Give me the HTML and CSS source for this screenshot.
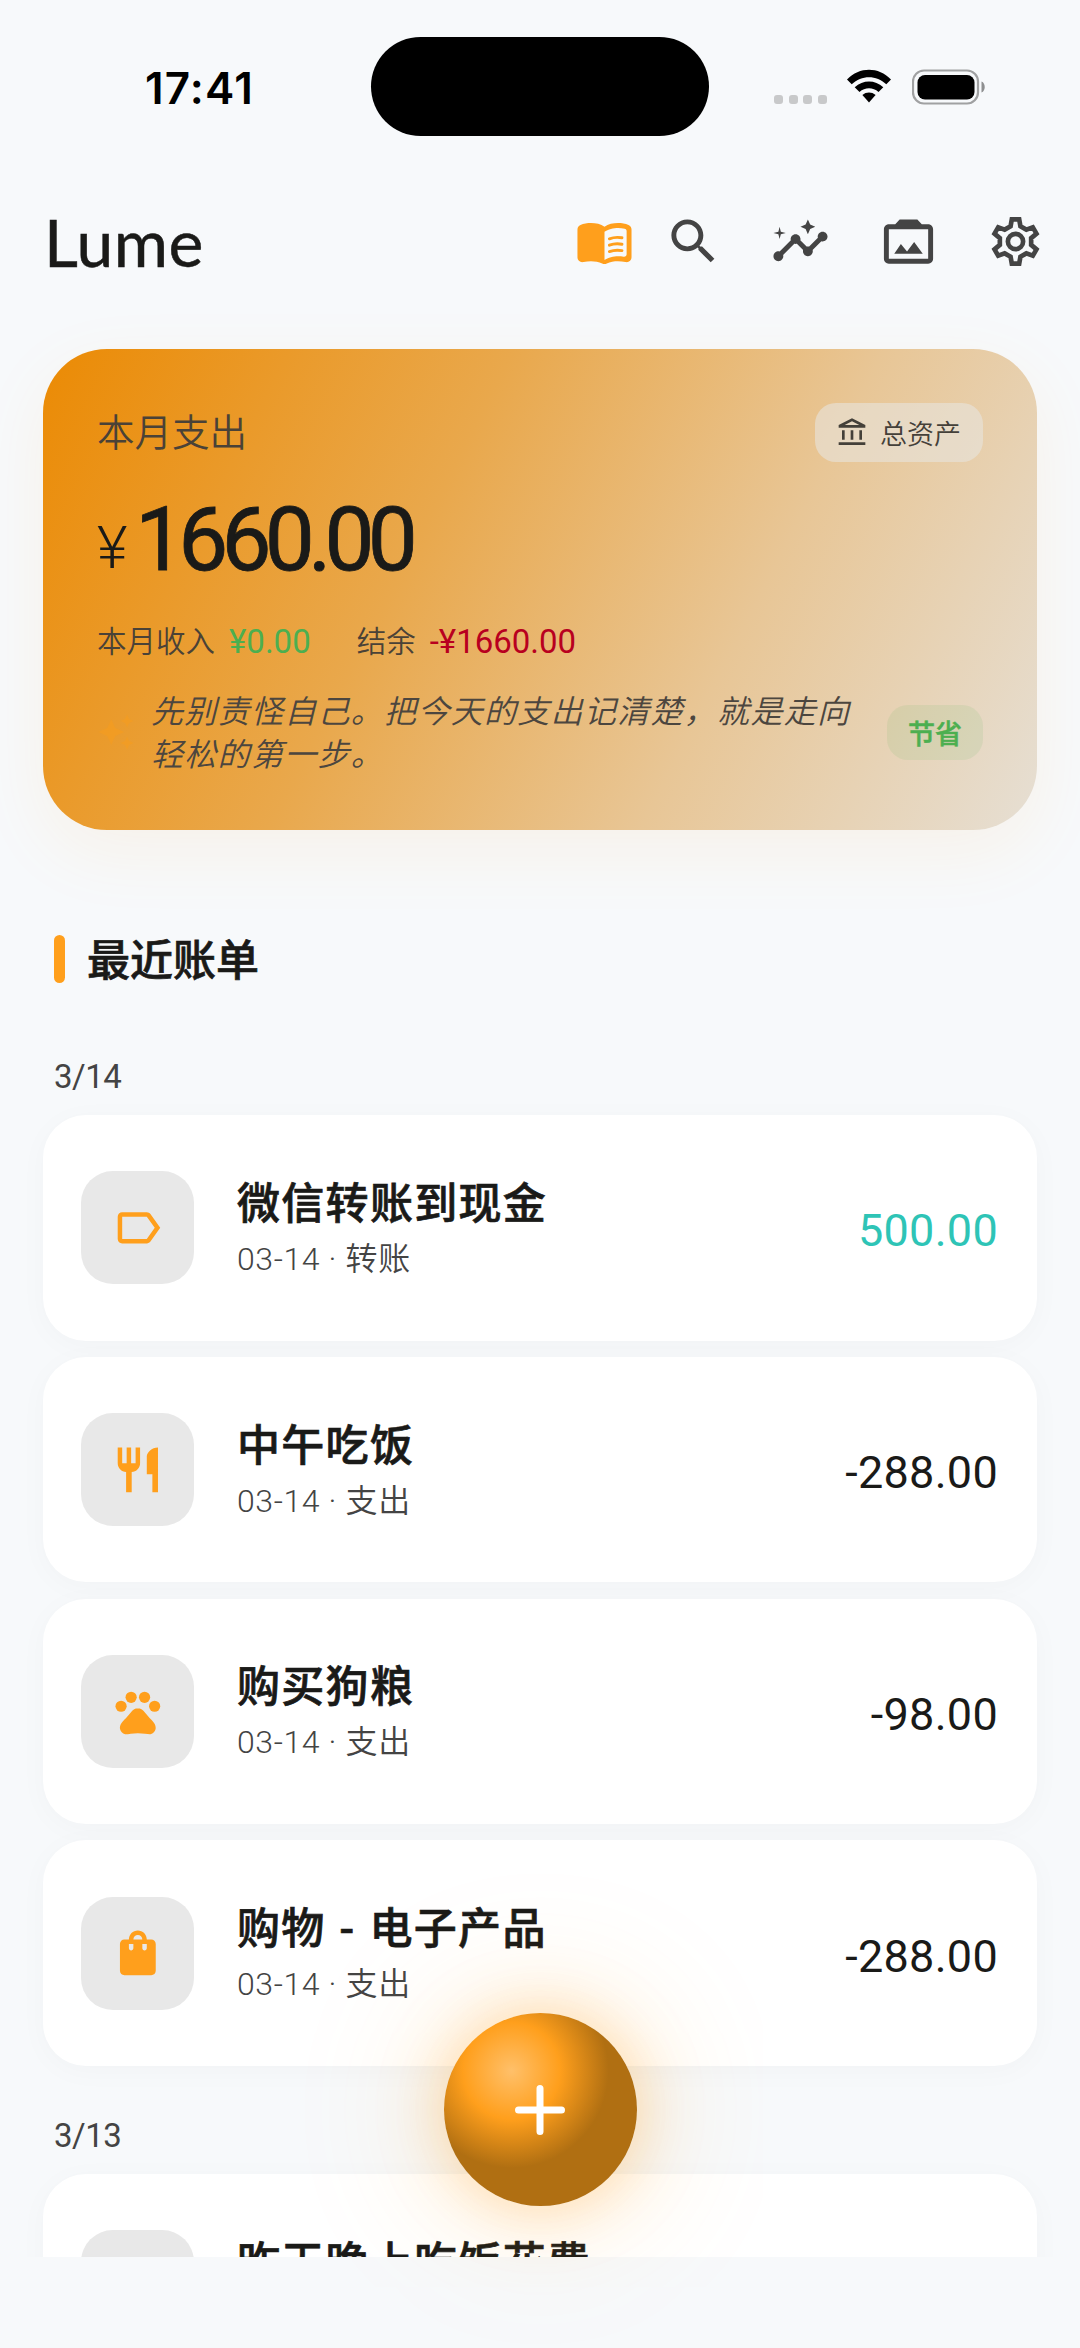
FILE: index.html
```html
<!DOCTYPE html>
<html lang="zh-CN">
<head>
<meta charset="utf-8">
<title>Lume</title>
<link rel="stylesheet" href="styles.css">
</head>
<body>
<div class="screen">
  <header class="status">
    <div class="time">17:41</div>
    <div class="island"></div>
    <div class="indicators">
      <span class="dots"><i></i><i></i><i></i><i></i></span>
      <svg class="wifi" viewBox="0 0 46 34" width="46" height="34"><path d="M1 10.500C13.500-2.500 32.500-2.500 45 10.500L40.300 15.300C30.500 5.800 15.500 5.800 5.700 15.300Z"/><path d="M8.700 18.200C17 10.500 29 10.500 37.300 18.200L32.500 23C27 18 19 18 13.500 23Z"/><path d="M16.400 26C20.200 22.700 25.800 22.700 29.600 26L23 33.500Z"/></svg>
      <svg class="battery" viewBox="0 0 74 36" width="74" height="36"><rect x="1" y="1.500" width="65" height="33" rx="11" fill="none" stroke="#a0a1a2" stroke-width="2.200"/><rect x="5.500" y="6" width="57" height="24.500" rx="7.500"/><path d="M69.500 12.500C73.800 14 73.800 22 69.500 23.500Z" fill="#8e8f90"/></svg>
    </div>
  </header>

  <nav class="appbar">
    <h1>Lume</h1>
    <div class="actions">
      <svg class="icon accent" viewBox="0 0 24 24"><path fill-rule="evenodd" d="M17.500 4.500c-1.950 0-4.050.4-5.500 1.500-1.450-1.100-3.550-1.500-5.500-1.500-1.450 0-2.990.22-4.280.79C1.490 5.620 1 6.330 1 7.140v11.280c0 1.300 1.220 2.260 2.480 1.940.98-.25 2.020-.36 3.020-.36 1.560 0 3.220.26 4.560.92.6.3 1.280.3 1.870 0 1.340-.67 3-.92 4.560-.92 1 0 2.040.11 3.020.36 1.260.33 2.480-.63 2.480-1.940V7.140c0-.81-.49-1.520-1.220-1.850-1.280-.57-2.820-.79-4.270-.79M21 17.230c0 .63-.58 1.090-1.200.98-.75-.14-1.530-.2-2.300-.2-1.700 0-4.150.65-5.500 1.500V8c1.350-.85 3.800-1.500 5.500-1.500.92 0 1.830.09 2.700.28.460.1.800.51.800.98z"/><path d="M14 10.900c1.600-.6 3.500-.7 5.100-.4M14 13.500c1.600-.6 3.500-.7 5.100-.4M14 16.100c1.600-.6 3.500-.7 5.100-.4" fill="none" stroke="currentColor" stroke-width="1.200" stroke-linecap="round"/></svg>
      <svg class="icon" viewBox="0 0 24 24"><path d="M15.500 14h-.79l-.28-.27C15.410 12.590 16 11.110 16 9.500 16 5.910 13.090 3 9.500 3S3 5.910 3 9.500 5.910 16 9.500 16c1.610 0 3.090-.59 4.230-1.570l.27.28v.79l5 4.990L20.490 19l-4.990-5zm-6 0C7.010 14 5 11.990 5 9.500S7.010 5 9.500 5 14 7.010 14 9.500 11.990 14 9.500 14z"/></svg>
      <svg class="icon" viewBox="0 0 24 24"><path d="M21 8c-1.450 0-2.260 1.440-1.930 2.510l-3.550 3.560c-.3-.09-.74-.09-1.040 0l-2.550-2.550C12.270 10.450 11.460 9 10 9c-1.450 0-2.270 1.440-1.930 2.520l-4.560 4.550C2.440 15.740 1 16.550 1 18c0 1.100.9 2 2 2 1.450 0 2.260-1.440 1.930-2.510l4.550-4.560c.3.090.74.090 1.040 0l2.550 2.550C12.730 16.550 13.540 18 15 18c1.450 0 2.270-1.440 1.930-2.520l3.560-3.550C21.560 12.260 23 11.450 23 10c0-1.100-.9-2-2-2z"/><path d="M15 9l.94-2.070L18 6l-2.060-.93L15 3l-.92 2.070L12 6l2.080.93zM3.500 11L4 9l2-.5L4 8l-.5-2L3 8l-2 .5L3 9z"/></svg>
      <svg class="icon" viewBox="0 0 24 24"><path d="M20 5h-2.600L15.600 3H8.400L6.600 5H4c-1.100 0-2 .9-2 2v12c0 1.100.9 2 2 2h16c1.100 0 2-.9 2-2V7c0-1.100-.9-2-2-2zm0 14H4V7h16v12z"/><path d="M6.200 17L8.900 13l2.500 3.100L14.300 12.200L17.800 17z"/></svg>
      <svg class="icon" viewBox="-12 -12 24 24"><path class="line" d="M-1.500-9H1.500L2-6.200L4.400-4.840L7.040-5.800L8.540-3.200L6.370-1.370V1.370L8.540 3.200L7.040 5.800L4.400 4.840L2 6.200L1.500 9H-1.500L-2 6.200L-4.400 4.840L-7.040 5.800L-8.540 3.200L-6.370 1.370V-1.370L-8.540-3.200L-7.040-5.800L-4.400-4.840L-2-6.200Z"/><circle class="line" r="3.100"/></svg>
    </div>
  </nav>

  <section class="summary">
    <div class="sum-top">
      <span class="label">本月支出</span>
      <span class="chip assets"><svg viewBox="0 0 24 24" width="32" height="32"><path d="M6.500 10h-2v7h2zM13 10h-2v7h2zM22 19H2v2h20zM19.500 10h-2v7h2zM12 1L2 6v2h20V6zM12 3.260L17.480 6H6.520z"/></svg>总资产</span>
    </div>
    <div class="total"><span class="yen">¥</span><span class="sum">1660.00</span></div>
    <div class="figures">
      <span>本月收入</span><b class="income">¥0.00</b><span class="second">结余</span><b class="balance">-¥1660.00</b>
    </div>
    <div class="advice">
      <svg class="spark" viewBox="0 0 24 24" width="38" height="38"><path d="M19 9l1.250-2.750L23 5l-2.750-1.250L19 1l-1.250 2.750L15 5l2.750 1.250zM11.500 9.500L9 4 6.500 9.500 1 12l5.500 2.500L9 20l2.500-5.500L17 12zM19 15l-1.250 2.750L15 19l2.750 1.250L19 23l1.250-2.750L23 19l-2.750-1.250z"/></svg>
      <p>先别责怪自己。把今天的支出记清楚，就是走向<br>轻松的第一步。</p>
      <span class="chip saving">节省</span>
    </div>
  </section>

  <h2>最近账单</h2>

  <main class="list">
    <h3>3/14</h3>
    <article class="bill">
      <span class="cat"><svg viewBox="0 0 24 24"><path d="M17.630 5.840C17.270 5.330 16.670 5 16 5L5 5.010C3.900 5.010 3 5.900 3 7v10c0 1.100.9 1.990 2 1.990L16 19c.67 0 1.270-.33 1.630-.84L22 12l-4.370-6.160zM16 17H5V7h11l3.550 5L16 17z"/></svg></span>
      <div class="info"><h4>微信转账到现金</h4><p><em>03-14 · </em>转账</p></div>
      <span class="amount transfer">500.00</span>
    </article>
    <article class="bill">
      <span class="cat"><svg viewBox="0 0 24 24"><path d="M11 9H9V2H7v7H5V2H3v7c0 2.120 1.660 3.840 3.750 3.970V22h2.500v-9.030C11.340 12.840 13 11.120 13 9V2h-2v7zm5-3v8h2.500v8H21V2c-2.760 0-5 2.240-5 4z"/></svg></span>
      <div class="info"><h4>中午吃饭</h4><p><em>03-14 · </em>支出</p></div>
      <span class="amount">-288.00</span>
    </article>
    <article class="bill">
      <span class="cat"><svg viewBox="0 0 24 24"><circle cx="4.500" cy="9.500" r="2.500"/><circle cx="9" cy="5.500" r="2.500"/><circle cx="15" cy="5.500" r="2.500"/><circle cx="19.500" cy="9.500" r="2.500"/><path d="M17.340 14.860c-.87-1.020-1.600-1.890-2.480-2.910-.46-.54-1.050-1.080-1.750-1.320-.11-.04-.22-.07-.33-.09-.25-.04-.52-.04-.78-.04s-.53 0-.79.050c-.11.020-.22.050-.33.090-.7.240-1.280.78-1.750 1.320-.87 1.020-1.600 1.890-2.480 2.910-1.310 1.310-2.920 2.760-2.620 4.790.29 1.020 1.020 2.030 2.330 2.320.73.150 3.060-.44 5.540-.44h.18c2.480 0 4.810.58 5.540.44 1.310-.29 2.040-1.310 2.330-2.320.31-2.040-1.300-3.490-2.610-4.800z"/></svg></span>
      <div class="info"><h4>购买狗粮</h4><p><em>03-14 · </em>支出</p></div>
      <span class="amount">-98.00</span>
    </article>
    <article class="bill">
      <span class="cat"><svg viewBox="0 0 24 24"><path fill-rule="evenodd" d="M18 6h-2c0-2.210-1.790-4-4-4S8 3.790 8 6H6c-1.100 0-2 .9-2 2v12c0 1.100.9 2 2 2h12c1.100 0 2-.9 2-2V8c0-1.100-.9-2-2-2zm-8 4c0 .55-.45 1-1 1s-1-.45-1-1V8h2v2zm2-6c1.100 0 2 .9 2 2h-4c0-1.100.9-2 2-2zm4 6c0 .55-.45 1-1 1s-1-.45-1-1V8h2v2z"/></svg></span>
      <div class="info"><h4>购物 - 电子产品</h4><p><em>03-14 · </em>支出</p></div>
      <span class="amount">-288.00</span>
    </article>
    <h3 class="next">3/13</h3>
    <article class="bill">
      <span class="cat"></span>
      <div class="info partial"><h4>昨天晚上吃饭花费</h4></div>
    </article>
  </main>

  <button class="fab" aria-label="添加"><svg viewBox="0 0 52 52" width="52" height="52"><path d="M26 4.500v43M4.500 26h43" stroke="#fff" stroke-width="7" stroke-linecap="round"/></svg></button>
</div>
</body>
</html>
```
FILE: styles.css
```css
* { box-sizing: border-box; margin: 0; padding: 0; }
body {
  background: #f7f9fb;
  color: #1a1a18;
  font-family: Roboto, "Noto Sans CJK SC", sans-serif;
}
h1, h2, h3, h4 { font-weight: 400; }
svg { display: block; flex: none; fill: currentColor; }
.screen {
  position: relative;
  width: 1080px;
  height: 2348px;
  overflow: hidden;
  display: flex;
  flex-direction: column;
  padding: 0 43px;
}

/* status bar */
.status {
  height: 174px;
  display: grid;
  grid-template-columns: 328px 338px 1fr;
  align-items: start;
  color: #000;
}
.time {
  padding: 61px 0 0 102px;
  font: 600 44px/54px Inter, sans-serif;
  letter-spacing: 1.200px;
}
.island { height: 99px; margin-top: 37px; border-radius: 50px; background: #000; }
.indicators { display: flex; padding: 69px 0 0 65px; }
.dots { display: flex; gap: 5.500px; padding-top: 26px; margin-right: 19px; }
.dots i { width: 9px; height: 9px; border-radius: 3px; background: #c8c9ca; }
.battery { margin-left: 20px; }

/* app bar */
.appbar {
  height: 134px;
  display: flex;
  align-items: center;
  justify-content: space-between;
  margin-right: -8px;
}
h1 { font: 400 66px/80px Lato, sans-serif; padding: 2px 0 0 1px; letter-spacing: 0.5px; -webkit-text-stroke: 0.5px currentColor; }
.actions { display: flex; gap: 48.500px; color: #444; }
.icon { width: 59px; height: 59px; }
.accent { color: #ff9f1c; margin-right: -19px; }
.line { fill: none; stroke: currentColor; stroke-width: 1.900; }

/* monthly summary */
.summary {
  flex: none;
  height: 481px;
  margin-top: 41px;
  padding: 54px;
  border-radius: 64px;
  background: linear-gradient(117deg, #eb8c08 2%, #e9a84c 38%, #e8c696 68%, #e6dfd4 100%);
  box-shadow: 0 22px 70px rgba(255, 159, 28, 0.08);
  color: #4a4237;
}
.sum-top { display: flex; justify-content: space-between; height: 59px; }
.label { font-size: 37.500px; line-height: 61px; font-weight: 350; }
.chip { display: flex; align-items: center; border-radius: 21px; font-size: 27px; }
.assets {
  width: 168px;
  height: 59px;
  padding-left: 21px;
  gap: 12px;
  background: rgba(232, 228, 222, 0.6);
  color: #444039;
  font-weight: 350;
}
.total { display: flex; align-items: baseline; height: 104px; margin-top: 26px; color: #1a1a18; line-height: 104px; }
.yen { width: 38px; font-size: 59px; font-weight: 300; position: relative; top: -2px; }
.sum { font-size: 89px; font-weight: 400; letter-spacing: -6.800px; -webkit-text-stroke: 0.8px currentColor; }
.figures { display: flex; height: 44px; line-height: 44px; margin-top: 28px; font-size: 29.500px; font-weight: 350; }
.figures b { font-weight: 400; font-size: 33px; margin-left: 14px; letter-spacing: 0; }
.figures .second { margin-left: 46px; }
.income { color: #4caf50; }
.balance { color: #b8001f; }
.advice { display: flex; margin-top: 27px; height: 86px; align-items: center; }
.spark { color: #f99d1c; opacity: 0.5; margin-top: -4px; }
.advice p {
  flex: 1;
  margin-left: 16px;
  white-space: nowrap;
  font-size: 32px;
  line-height: 43px;
  letter-spacing: 1.300px;
  font-style: italic;
  font-weight: 350;
  color: #4c463f;
}
.saving {
  width: 96px;
  height: 55px;
  margin-top: -3px;
  justify-content: center;
  background: rgba(76, 175, 80, 0.1);
  color: #4caf50;
  font-weight: 500;
  -webkit-text-stroke: 0.5px currentColor;
}

/* section heading */
h2 {
  flex: none;
  display: flex;
  align-items: center;
  height: 48px;
  margin: 105px 0 0 11px;
  font-size: 43px;
  font-weight: 500;
  line-height: 52px;
  padding-top: 3px;
  -webkit-text-stroke: 0.7px currentColor;
}
h2::before { content: ""; width: 11px; height: 48px; margin: -3px 22px 0 0; border-radius: 6px; background: #ff9f1c; }

/* bills */
.list {
  flex: none;
  height: 1230px;
  margin: 44px -43px 0;
  padding: 0 43px;
  overflow: hidden;
}
h3 { margin: 29px 0 17px 11px; font-size: 33px; line-height: 42px; color: #444; letter-spacing: -0.5px; }
h3.next { margin: 49px 0 17px 11px; }
.bill {
  display: flex;
  align-items: center;
  height: 225.700px;
  padding: 0 39px 0 38px;
  border-radius: 43px;
  background: #fff;
  box-shadow: 0 5px 30px rgba(0, 0, 0, 0.028);
}
.bill + .bill { margin-top: 16.100px; }
.cat {
  width: 113px;
  height: 113px;
  display: grid;
  place-items: center;
  border-radius: 32px;
  background: #e8e8e8;
  color: #ff9f1c;
}
.cat svg { width: 53.700px; height: 53.700px; }
.info { flex: 1; margin-left: 43px; }
.partial { padding-bottom: 48px; }
h4 { font-size: 43px; line-height: 60px; font-weight: 500; letter-spacing: 1.300px; word-spacing: 2px; -webkit-text-stroke: 0.7px currentColor; }
.info p { font-size: 32px; line-height: 48px; color: #444; font-weight: 350; letter-spacing: 0.8px; position: relative; top: 1px; }
.info em { font-style: normal; font-weight: 300; letter-spacing: 0.6px; white-space: pre; }
.amount { font-size: 45px; padding-top: 6px; letter-spacing: 0.3px; }

/* floating action button */
.fab {
  position: absolute;
  left: 443.500px;
  top: 2013px;
  width: 193px;
  height: 193px;
  display: grid;
  place-items: center;
  border: 0;
  border-radius: 50%;
  background: radial-gradient(circle 97px at 35% 30%, #ffc06a 0%, #ff9f1c 50%, #b06f12 100%);
  box-shadow: 0 0 64px rgba(255, 159, 28, 0.36), 0 0 150px 10px rgba(255, 159, 28, 0.17);
}
.transfer { color: #2ec4b6; }
```
